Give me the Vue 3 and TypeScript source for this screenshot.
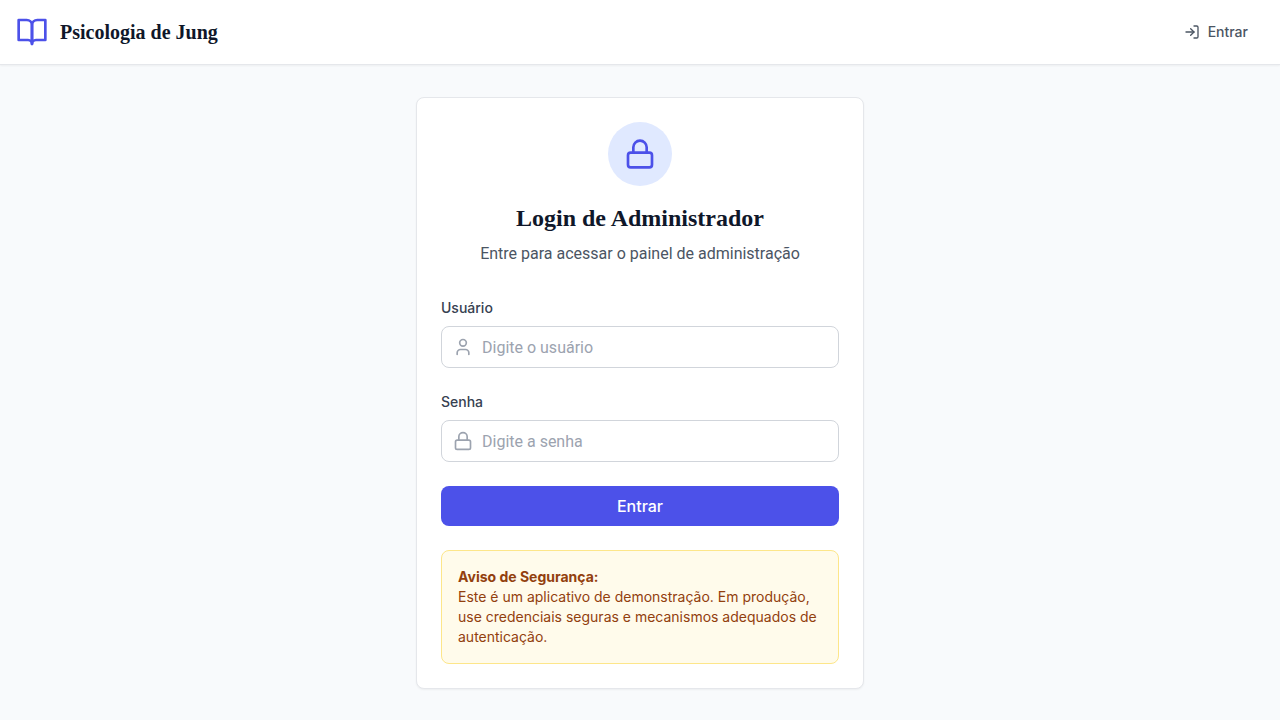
<script setup lang="ts">
import { ref } from 'vue'

const username = ref<string>('')
const password = ref<string>('')

function submit(): void {
  password.value = ''
}
</script>

<template>
  <div class="page">
    <header class="topbar">
      <a class="brand" href="#">
        <svg class="icon brand-icon" viewBox="0 0 24 24" aria-hidden="true">
          <path d="M2 3h6a4 4 0 0 1 4 4v14a3 3 0 0 0-3-3H2z" />
          <path d="M22 3h-6a4 4 0 0 0-4 4v14a3 3 0 0 1 3-3h7z" />
        </svg>
        <span>Psicologia de Jung</span>
      </a>
      <nav>
        <a class="nav-link" href="#login">
          <svg class="icon nav-icon" viewBox="0 0 24 24" aria-hidden="true">
            <path d="M15 3h4a2 2 0 0 1 2 2v14a2 2 0 0 1-2 2h-4" />
            <polyline points="10 17 15 12 10 7" />
            <line x1="15" x2="3" y1="12" y2="12" />
          </svg>
          <span>Entrar</span>
        </a>
      </nav>
    </header>

    <main class="content">
      <section id="login" class="card">
        <div class="intro">
          <div class="badge">
            <svg class="icon badge-icon" viewBox="0 0 24 24" aria-hidden="true">
              <rect width="18" height="11" x="3" y="11" rx="2" />
              <path d="M7 11V7a5 5 0 0 1 10 0v4" />
            </svg>
          </div>
          <h1>Login de Administrador</h1>
          <p>Entre para acessar o painel de administração</p>
        </div>

        <form class="form" @submit.prevent="submit">
          <div class="field">
            <label for="username">Usuário</label>
            <div class="control">
              <svg class="icon control-icon" viewBox="0 0 24 24" aria-hidden="true">
                <path d="M19 21v-2a4 4 0 0 0-4-4H9a4 4 0 0 0-4 4v2" />
                <circle cx="12" cy="7" r="4" />
              </svg>
              <input id="username" v-model="username" type="text" placeholder="Digite o usuário" />
            </div>
          </div>
          <div class="field">
            <label for="password">Senha</label>
            <div class="control">
              <svg class="icon control-icon" viewBox="0 0 24 24" aria-hidden="true">
                <rect width="18" height="11" x="3" y="11" rx="2" />
                <path d="M7 11V7a5 5 0 0 1 10 0v4" />
              </svg>
              <input id="password" v-model="password" type="password" placeholder="Digite a senha" />
            </div>
          </div>
          <button type="submit">Entrar</button>
        </form>

        <p class="notice">
          <strong>Aviso de Segurança:</strong><br />
          Este é um aplicativo de demonstração. Em produção, use credenciais seguras e mecanismos
          adequados de autenticação.
        </p>
      </section>
    </main>
  </div>
</template>

<style>
body {
  background: #f8fafc;
}
</style>

<style scoped>
.page,
.page * {
  box-sizing: border-box;
}

.page {
  min-height: 100vh;
  background: #f8fafc;
  color: #0f172a;
  font-family: Inter, 'Liberation Sans', sans-serif;
  font-size: 16px;
  line-height: 24px;
}

.icon {
  flex: none;
  fill: none;
  stroke: currentColor;
  stroke-width: 2;
  stroke-linecap: round;
  stroke-linejoin: round;
}

.topbar {
  display: flex;
  align-items: center;
  justify-content: space-between;
  min-height: 65px;
  padding: 0 16px;
  background: #fff;
  border-bottom: 1px solid #e5e7eb;
  box-shadow: 0 1px 2px rgba(0, 0, 0, 0.05);
}

.brand {
  display: flex;
  align-items: center;
  gap: 12px;
  color: #0f172a;
  font-family: 'Liberation Serif', serif;
  font-size: 20px;
  font-weight: 700;
  line-height: 28px;
  text-decoration: none;
}

.brand-icon {
  width: 32px;
  height: 32px;
  color: #4c51e9;
}

.nav-link {
  display: flex;
  align-items: center;
  gap: 8px;
  padding: 8px 16px;
  color: #4b5563;
  font-size: 14px;
  font-weight: 500;
  line-height: 20px;
  text-decoration: none;
}

.nav-icon {
  width: 16px;
  height: 16px;
}

.content {
  padding: 32px 16px;
}

.card {
  max-width: 448px;
  margin: 0 auto;
  padding: 24px;
  background: #fff;
  border: 1px solid #e5e7eb;
  border-radius: 8px;
  box-shadow: 0 1px 2px rgba(0, 0, 0, 0.05);
}

.intro {
  margin-bottom: 32px;
  text-align: center;
}

.badge {
  display: flex;
  align-items: center;
  justify-content: center;
  width: 64px;
  height: 64px;
  margin: 0 auto 16px;
  color: #4c51e9;
  background: #e0e9ff;
  border-radius: 50%;
}

.badge-icon {
  width: 32px;
  height: 32px;
}

h1 {
  margin: 0 0 8px;
  font-family: 'Liberation Serif', serif;
  font-size: 24px;
  font-weight: 700;
  line-height: 32px;
}

.intro p {
  margin: 0;
  color: #4b5563;
  font-family: Roboto, 'Liberation Sans', sans-serif;
}

.form {
  display: grid;
  gap: 24px;
}

.field {
  display: grid;
  gap: 8px;
}

label {
  color: #374151;
  font-size: 14px;
  font-weight: 500;
  line-height: 20px;
}

.control {
  display: flex;
  align-items: center;
  gap: 9px;
  padding: 0 11px;
  color: #9ca3af;
  border: 1px solid #d1d5db;
  border-radius: 8px;
}

.control:focus-within {
  border-color: #4c51e9;
}

.control-icon {
  width: 20px;
  height: 20px;
}

input {
  flex: 1;
  min-width: 0;
  height: 40px;
  padding: 0;
  color: #0f172a;
  background: transparent;
  border: 0;
  outline: 0;
  font: inherit;
  font-family: Roboto, 'Liberation Sans', sans-serif;
}

input::placeholder {
  color: #9ca3af;
}

button {
  padding: 8px 16px;
  color: #fff;
  background: #4c51e9;
  border: 0;
  border-radius: 8px;
  font: inherit;
  font-weight: 500;
  cursor: pointer;
}

.notice {
  margin: 24px 0 0;
  padding: 16px;
  color: #92400e;
  background: #fffbeb;
  border: 1px solid #fde68a;
  border-radius: 8px;
  font-size: 14px;
  line-height: 20px;
}
</style>
